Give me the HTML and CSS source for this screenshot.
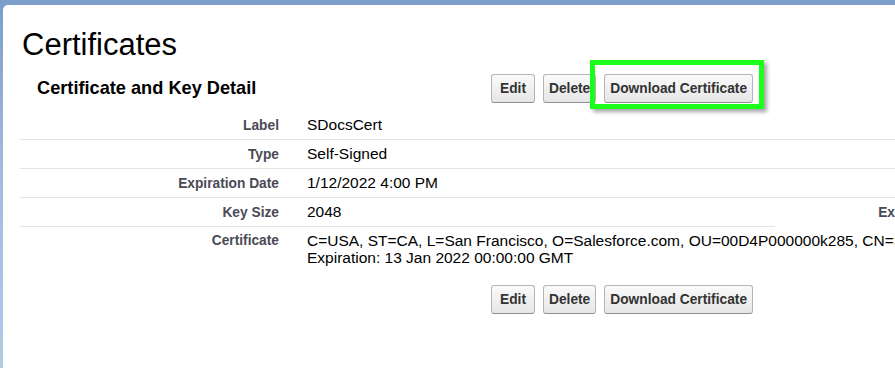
FILE: index.html
```html
<!DOCTYPE html>
<html lang="en">
<head>
  <meta charset="UTF-8">
  <meta name="viewport" content="width=device-width, initial-scale=1.0">
  <title>Certificates</title>
  <link rel="stylesheet" href="styles.css">
</head>
<body>
  <div class="page">
    <section class="card">
      <h1 class="page_title">Certificates</h1>
      <div class="block_head">
        <h2>Certificate and Key Detail</h2>
        <div class="btns">
          <button class="btn">Edit</button>
          <button class="btn">Delete</button>
          <button class="btn marked">Download Certificate</button>
        </div>
      </div>
      <div class="detail">
        <div class="row">
          <span class="lbl">Label</span><span class="val">SDocsCert</span><span class="lbl"></span><span class="val"></span>
        </div>
        <div class="row">
          <span class="lbl">Type</span><span class="val">Self-Signed</span><span class="lbl"></span><span class="val"></span>
        </div>
        <div class="row">
          <span class="lbl">Expiration Date</span><span class="val">1/12/2022 4:00 PM</span><span class="lbl"></span><span class="val"></span>
        </div>
        <div class="row short">
          <span class="lbl">Key Size</span><span class="val">2048</span><span class="lbl">Exportable Private Key</span><span class="val"></span>
        </div>
        <div class="row last">
          <span class="lbl">Certificate</span>
          <span class="val wide">C=USA, ST=CA, L=San Francisco, O=Salesforce.com, OU=00D4P000000k285, CN=SDocsCert<br>Expiration: 13 Jan 2022 00:00:00 GMT</span>
        </div>
      </div>
      <div class="btns bottom">
        <button class="btn">Edit</button>
        <button class="btn">Delete</button>
        <button class="btn">Download Certificate</button>
      </div>
    </section>
  </div>
</body>
</html>
```

FILE: styles.css
```css
html, body{  margin: 0;  padding: 0;  width: 100%;  height: 100%;  overflow: hidden;  }
h1, h2, button{  margin: 0;  padding: 0;  }
body{
  font-family: "Liberation Sans", Arial, sans-serif;
  background: linear-gradient(180deg, #7b9dca 0%, #9fbbdd 45%, #b3cae6 100%);
}
.page{  padding: 5px 0 0 3px;  height: 100%;  box-sizing: border-box;  }
.card{
  background: #fff;  border-top-left-radius: 5px;  height: 100%;
  padding: 22px 0 0 17px;  box-sizing: border-box;  width: 1500px;
}
.page_title{
  font-size: 31px;  line-height: 36px;  font-weight: normal;  color: #000;  margin-left: 2px;
}
.block_head{
  display: grid;  grid-template-columns: 471px auto;  align-items: center;
  margin-top: 11px;
}
.block_head > h2{
  font-size: 18.2px;  font-weight: bold;  color: #000;  padding-left: 17px;
}
.btns{  display: flex;  gap: 8px;  }
.btn{
  position: relative;
  height: 29px;  min-width: 44px;  padding: 0 5px;
  font-family: inherit;  font-size: 13.75px;  font-weight: bold;  color: #333;
  background: linear-gradient(180deg, #fafafa 0%, #f0f0f0 50%, #e6e6e6 100%);
  border: 1px solid #b5b5b5;  border-bottom-color: #8f8f8f;  border-radius: 3px;
}
/* annotation frame */
.marked::after{
  content: "";  position: absolute;  top: -15px;  left: -15px;  right: -12px;  bottom: -7px;
  border: 5px solid #1aff1a;  box-shadow: 3px 3px 4px rgba(0,0,0,0.35);
  pointer-events: none;
}

.detail{  margin-top: 8px;  width: 1480px;  }
.row{
  display: grid;  grid-template-columns: 273px 482px 267px 1fr;
  align-items: center;  height: 29px;
}
.row > span{  border-bottom: 1px solid #e4e4e4;  height: 100%;  display: flex;  align-items: center;  box-sizing: border-box;  }
.row.short > span:nth-child(n+3){  border-bottom-color: transparent;  }
.lbl{
  justify-content: flex-end;  padding-right: 14px;
  font-size: 13.75px;  font-weight: bold;  color: #4a4a56;  white-space: nowrap;
}
.val{  padding-left: 14px;  font-size: 15.5px;  color: #000;  white-space: nowrap;  }
.row.short .lbl:nth-child(3){  align-items: flex-start;  padding-top: 7px;  }

.row.last{  height: auto;  align-items: start;  }
.row.last > span{  border-bottom: 0;  display: block;  padding-top: 5px;  line-height: 17px;  }
.row.last .lbl{  text-align: right;  }
.row.last .wide{  grid-column: 2 / 5;  }

.btns.bottom{  padding-left: 471px;  margin-top: 19px;  }
.btns.bottom .btn{  height: 29px;  }
```
